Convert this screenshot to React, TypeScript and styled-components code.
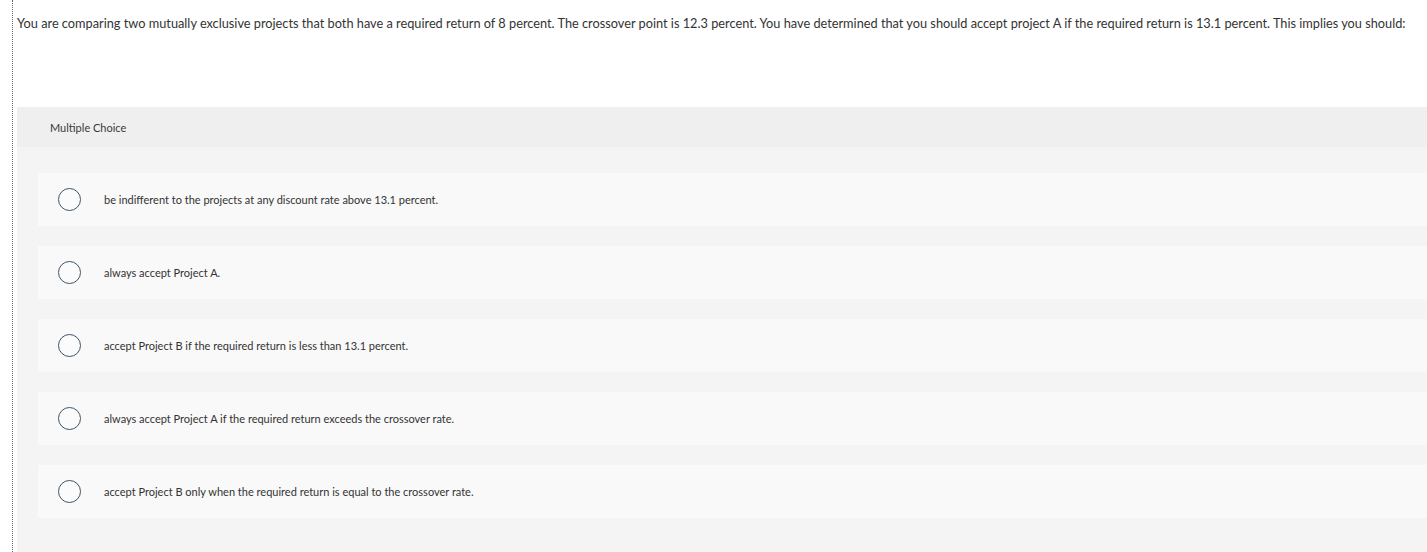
import React from 'react';
import styled, { createGlobalStyle } from 'styled-components';

const GlobalStyle = createGlobalStyle`
	html, body {
		margin: 0;
		padding: 0;
		background: #ffffff;
	}
	body {
		font-family: Lato, 'Open Sans', Arial, sans-serif;
		color: #333333;
	}
`;

const Page = styled.div`
	width: 1427px;
	height: 552px;
	overflow: hidden;
	padding-left: 12px;
	box-sizing: border-box;
`;

const Frame = styled.div`
	border-left: 1px dotted #5a6a7a;
	height: 100%;
	padding-left: 4px;
	display: flex;
	flex-direction: column;
`;

const Question = styled.p`
	margin: 0;
	padding-top: 15px;
	height: 107px;
	flex-shrink: 0;
	box-sizing: border-box;
	font-size: 12.75px;
	line-height: 16px;
	white-space: nowrap;
	color: #333333;
`;

const Panel = styled.section`
	background: #f4f4f4;
	flex: 1;
`;

const PanelHeader = styled.div`
	background: #efefef;
	height: 40px;
	padding-left: 33px;
	display: flex;
	align-items: center;
	font-size: 11px;
	color: #3a3a3a;
`;

const ChoiceList = styled.ul`
	list-style: none;
	margin: 0;
	padding: 26px 0 0 21px;
	display: flex;
	flex-direction: column;
	gap: 20px;
`;

const Choice = styled.li`
	background: #f9f9f9;
	height: 53px;
	display: flex;
	align-items: center;
	padding-left: 20px;
	font-size: 11px;
	color: #333333;
`;

const Radio = styled.span`
	width: 21px;
	height: 21px;
	border: 1.5px solid #3d5568;
	border-radius: 50%;
	background: #fbfbfb;
	flex-shrink: 0;
	margin-right: 23px;
`;

const choices = [
	'be indifferent to the projects at any discount rate above 13.1 percent.',
	'always accept Project A.',
	'accept Project B if the required return is less than 13.1 percent.',
	'always accept Project A if the required return exceeds the crossover rate.',
	'accept Project B only when the required return is equal to the crossover rate.',
];

export default function App() {
	return (
		<>
			<GlobalStyle />
			<Page>
				<Frame>
					<Question>
						You are comparing two mutually exclusive projects that both have a required return of 8 percent. The crossover point is 12.3 percent. You have determined that you should accept project A if the required return is 13.1 percent. This implies you should:
					</Question>
					<Panel>
						<PanelHeader>Multiple Choice</PanelHeader>
						<ChoiceList>
							{choices.map((text) => (
								<Choice key={text}>
									<Radio />
									{text}
								</Choice>
							))}
						</ChoiceList>
					</Panel>
				</Frame>
			</Page>
		</>
	);
}
